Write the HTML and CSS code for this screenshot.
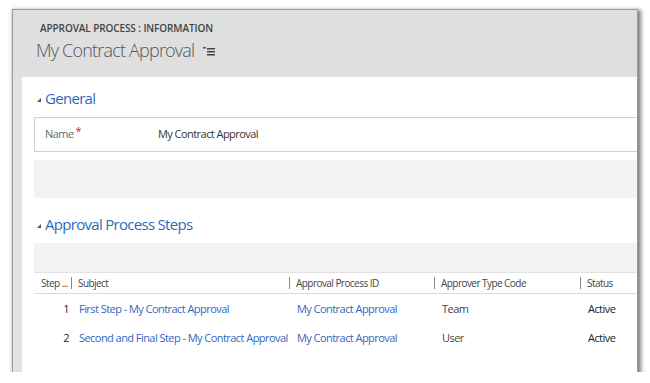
FILE: index.html
```html
<!DOCTYPE html>
<html lang="en">
<head>
    <meta charset="UTF-8">
    <title>Approval Process : Information</title>
    <link rel="stylesheet" href="styles.css">
</head>
<body>
    <div class="window">
        <div class="form-header">
            <div class="entity-name">APPROVAL PROCESS : INFORMATION</div>
            <div class="record-title">
                <span>My Contract Approval</span>
                <svg class="menu-icon" width="12" height="9" viewBox="0 0 12 9">
                    <rect x="0" y="0" width="3" height="1.5" fill="#555"/>
                    <rect x="4" y="1" width="8" height="1.5" fill="#444"/>
                    <rect x="4" y="4" width="8" height="1.5" fill="#444"/>
                    <rect x="4" y="7" width="8" height="1.5" fill="#444"/>
                </svg>
            </div>
        </div>

        <div class="form-body">
            <div class="panel">
                <!-- General section -->
                <h2 class="section-title"><span class="caret"></span>General</h2>
                <div class="field-box">
                    <div class="field-label">Name<span class="required">*</span></div>
                    <div class="field-value">My Contract Approval</div>
                </div>
                <div class="spacer-box"></div>

                <!-- Steps subgrid -->
                <h2 class="section-title"><span class="caret"></span>Approval Process Steps</h2>
                <div class="grid-toolbar"></div>
                <table class="grid">
                    <colgroup>
                        <col class="col-step">
                        <col class="col-subject">
                        <col class="col-process">
                        <col class="col-type">
                        <col>
                    </colgroup>
                    <thead>
                        <tr>
                            <th>Step ...</th>
                            <th>Subject</th>
                            <th>Approval Process ID</th>
                            <th>Approver Type Code</th>
                            <th>Status</th>
                        </tr>
                    </thead>
                    <tbody>
                        <tr>
                            <td class="num">1</td>
                            <td><a href="#">First Step - My Contract Approval</a></td>
                            <td><a href="#">My Contract Approval</a></td>
                            <td class="muted">Team</td>
                            <td>Active</td>
                        </tr>
                        <tr>
                            <td class="num">2</td>
                            <td><a href="#">Second and Final Step - My Contract Approval</a></td>
                            <td><a href="#">My Contract Approval</a></td>
                            <td class="muted">User</td>
                            <td>Active</td>
                        </tr>
                    </tbody>
                </table>
            </div>
        </div>
    </div>
</body>
</html>
```

FILE: styles.css
```css
body {
    margin: 0;
    background-color: #ffffff;
    font-family: "Open Sans", "Noto Sans", sans-serif;
    overflow: hidden;
}

.window {
    margin: 10px 0 0 13px;
    width: 624px;
    height: 362px;
    background-color: #e2e2e2;
    box-shadow: 0 0 0 1px #9a9a9a, 2px 2px 4px 2px rgba(0,0,0,0.5);
    display: flex;
    flex-direction: column;
    overflow: hidden;
}

.form-header {
    height: 67px;
    background-color: #dfdfdf;
    padding-left: 27px;
    box-sizing: border-box;
    padding-top: 11px;
}

.entity-name {
    font-size: 10px;
    font-weight: 600;
    color: #444;
    letter-spacing: -0.1px;
}

.record-title {
    margin-left: -4px;
    margin-top: 3px;
    display: flex;
    align-items: center;
    font-size: 18px;
    font-weight: 300;
    letter-spacing: -0.8px;
    color: #555;
}

.menu-icon {
    margin-left: 9px;
    margin-top: 3px;
}

.form-body {
    flex: 1;
    padding-left: 9px;
    display: flex;
}

.panel {
    flex: 1;
    background-color: #ffffff;
    padding: 10px 0 0 12px;
}

.section-title {
    margin: 0;
    height: 22px;
    padding-left: 3px;
    display: flex;
    align-items: center;
    font-size: 15px;
    font-weight: normal;
    letter-spacing: -0.7px;
    color: #2f69bf;
}

.section-title + .grid-toolbar {
    margin-top: 8px;
}

.caret {
    width: 0;
    height: 0;
    border-left: 4px solid transparent;
    border-bottom: 4px solid #555;
    margin-right: 4px;
    margin-top: 4px;
}

.field-box {
    margin-top: 8px;
    height: 35px;
    box-sizing: border-box;
    border: 1px solid #cfcfcf;
    border-right: none;
    display: flex;
    padding: 5px 0 0 10px;
    font-size: 11px;
    letter-spacing: -0.55px;
}

.field-label {
    width: 113px;
    color: #666;
}

.required {
    color: #d01818;
    font-size: 11px;
    vertical-align: 3px;
    margin-left: 2px;
}

.field-value {
    color: #333;
    padding-top: 3px;
}

.spacer-box {
    margin-top: 8px;
    margin-bottom: 15px;
    height: 38px;
    background-color: #f3f3f3;
}

.grid-toolbar {
    height: 29px;
    background-color: #f3f3f3;
}

.grid {
    width: 100%;
    table-layout: fixed;
    border-collapse: collapse;
    font-size: 11px;
    letter-spacing: -0.55px;
}

.col-step {
    width: 37px;
}

.col-subject {
    width: 218px;
}

.col-process {
    width: 145px;
}

.col-type {
    width: 146px;
}

.grid th {
    height: 20px;
    padding: 0 0 0 7px;
    text-align: left;
    font-weight: normal;
    font-size: 10px;
    letter-spacing: -0.55px;
    color: #444;
    white-space: nowrap;
    overflow: hidden;
    border-top: 1px solid #e2e2e2;
    border-bottom: 1px solid #dcdcdc;
}

.grid th + th {
    background: linear-gradient(#888, #888) no-repeat 0 center / 1px 12px;
}

.grid td {
    height: 29px;
    padding: 0 0 0 8px;
    color: #222;
    white-space: nowrap;
}

.grid td.num {
    text-align: right;
    padding: 0 2px 0 0;
}

.grid td.muted {
    color: #444;
}

.grid a {
    color: #3466c2;
    text-decoration: none;
}
```
